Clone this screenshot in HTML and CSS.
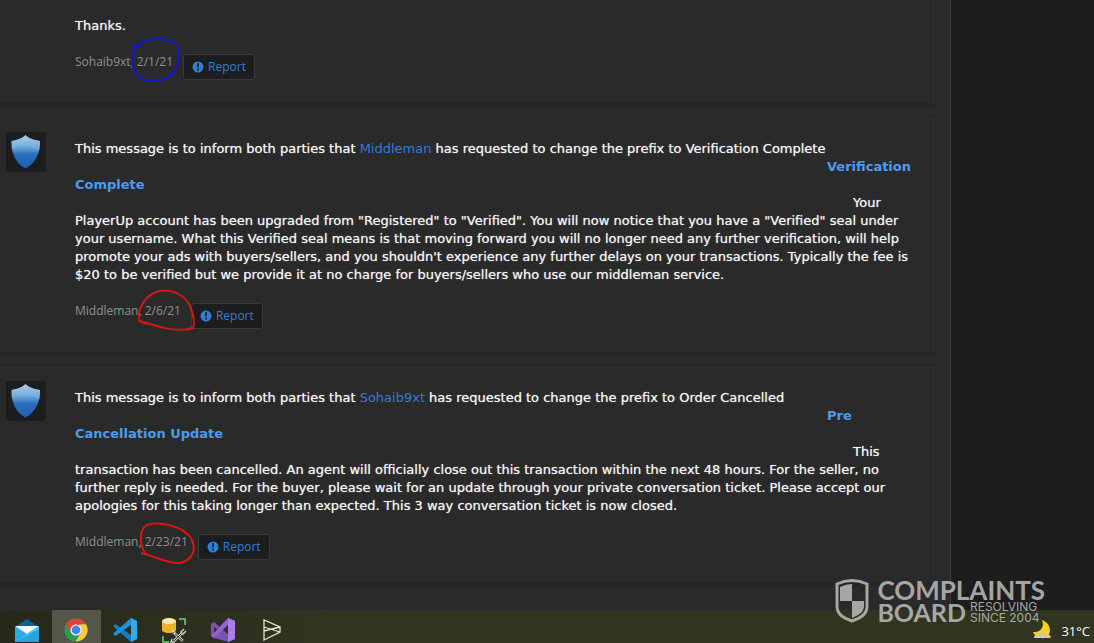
FILE: index.html
```html
<!DOCTYPE html>
<html lang="en">
<head>
<meta charset="utf-8">
<title>Conversation</title>
<link rel="stylesheet" href="styles.css">
</head>
<body>
<svg class="defs" aria-hidden="true">
  <defs>
    <linearGradient id="shield-fill" x1="0" y1="0" x2="0" y2="1">
      <stop offset="0" stop-color="#a5cbea"/>
      <stop offset=".42" stop-color="#5c9bd6"/>
      <stop offset=".58" stop-color="#2b6fbb"/>
      <stop offset="1" stop-color="#1e5fb0"/>
    </linearGradient>
    <symbol id="shield" viewBox="0 0 40 40">
      <path d="M19.500 3C22 6 28 8 34 9C34.500 20 30 31 19.500 36.500C9 31 5 20 5.500 9C11 8 17 6 19.500 3Z" fill="url(#shield-fill)"/>
      <path d="M5.700 17Q19 11 33.500 18Q34.500 12 34 9C28 8 22 6 19.500 3C17 6 11 8 5.500 9Z" fill="#b9d8f0" opacity=".2"/>
    </symbol>
    <symbol id="alert" viewBox="0 0 12 12">
      <circle cx="6" cy="6" r="5.500" fill="currentColor"/>
      <path d="M5 2.300H7L6.700 6.800H5.300Z" fill="#1c1d1e"/>
      <circle cx="6" cy="8.700" r="1" fill="#1c1d1e"/>
    </symbol>
  </defs>
</svg>
<div class="screen">
  <main class="page">
    <section class="thread">
      <article class="message first">
        <div class="body">
          <p>Thanks.</p>
          <footer class="meta">
            <span>Sohaib9xt, <span class="date">2/1/21<svg class="ring blue" viewBox="0 0 60 50"><path d="M7 10C2 16 0 29 5 37C11 48 27 47 37 43C47 38 50 23 48 13C45 4 31 3 20 5C14 6 9 9 4 15M3 12L10 8"/></svg></span></span>
            <button class="report" type="button"><svg><use href="#alert"/></svg>Report</button>
          </footer>
        </div>
      </article>
      <article class="message">
        <div class="avatar"><svg><use href="#shield"/></svg></div>
        <div class="body">
          <p>This message is to inform both parties that <a href="#">Middleman</a> has requested to change the prefix to Verification Complete</p>
          <p class="status">Verification<br>Complete</p>
          <p class="detail">Your<br>PlayerUp account has been upgraded from "Registered" to "Verified". You will now notice that you have a "Verified" seal under<br>your username. What this Verified seal means is that moving forward you will no longer need any further verification, will help<br>promote your ads with buyers/sellers, and you shouldn't experience any further delays on your transactions. Typically the fee is<br>$20 to be verified but we provide it at no charge for buyers/sellers who use our middleman service.</p>
          <footer class="meta">
            <span>Middleman, <span class="date">2/6/21<svg class="ring red" viewBox="0 0 60 50"><path d="M9 40L1 37C-1 28 5 14 16 9C29 3 45 9 51 20C55 29 57 39 55 44C41 49 21 43 2 37"/></svg></span></span>
            <button class="report" type="button"><svg><use href="#alert"/></svg>Report</button>
          </footer>
        </div>
      </article>
      <article class="message">
        <div class="avatar"><svg><use href="#shield"/></svg></div>
        <div class="body">
          <p>This message is to inform both parties that <a href="#">Sohaib9xt</a> has requested to change the prefix to Order Cancelled</p>
          <p class="status">Pre<br>Cancellation Update</p>
          <p class="detail">This<br>transaction has been cancelled. An agent will officially close out this transaction within the next 48 hours. For the seller, no<br>further reply is needed. For the buyer, please wait for an update through your private conversation ticket. Please accept our<br>apologies for this taking longer than expected. This 3 way conversation ticket is now closed.</p>
          <footer class="meta">
            <span>Middleman, <span class="date">2/23/21<svg class="ring red" viewBox="0 0 60 50"><path d="M3 39L7 38C1 27 1 15 9 10C20 6 45 11 53 23C59 34 55 45 42 48C29 49 14 40 3 38"/></svg></span></span>
            <button class="report" type="button"><svg><use href="#alert"/></svg>Report</button>
          </footer>
        </div>
      </article>
    </section>
  </main>
  <nav class="taskbar" aria-label="Taskbar">
    <button type="button" aria-label="Mail"><svg viewBox="0 0 26 26"><path d="M1 10L13 2L25 10V14H1Z" fill="#0f5da8"/><path d="M2 9H24V17H2Z" fill="#f5f8fb"/><path d="M1 9L13 17L25 9V25H1Z" fill="#27aee6"/><path d="M1 25L13 17L25 9V25Z" fill="#49c1ee"/><path d="M1 25L25 12V25Z" fill="#168fd0" opacity=".6"/></svg></button>
    <button class="active" type="button" aria-label="Chrome"><svg viewBox="0 0 26 26"><circle cx="13" cy="13" r="11.500" fill="#2a9d52"/><path d="M3 7.200A11.500 11.500 0 0 1 23 7.200L13 8L8 16Z" fill="#db4437"/><path d="M23 7.200A11.500 11.500 0 0 1 12.800 24.500L18 15L16 7.500Z" fill="#f9cc3d"/><circle cx="13" cy="13" r="5.600" fill="#fff"/><circle cx="13" cy="13" r="4.400" fill="#4580ea"/></svg></button>
    <button type="button" aria-label="Visual Studio Code"><svg viewBox="0 0 26 26"><path d="M19 1L25 4V22L19 25L3 11L1 9L3.500 7L19 18Z" fill="#147cc1"/><path d="M19 1L3 15L1 17L3.500 19L19 8Z" fill="#1b91d8"/><path d="M19 1L25 4V22L19 25Z" fill="#31a9ed"/></svg></button>
    <button type="button" aria-label="Database tools"><svg viewBox="0 0 26 26"><path d="M1 4V13C1 17 15 17 15 13V4Z" fill="#eeb32d"/><ellipse cx="8" cy="4" rx="7" ry="3" fill="#ffe9ad"/><path d="M18 2H24V8M2 19V25H8" fill="none" stroke="#66a866" stroke-width="2"/><path d="M12 15L22 24M13 24L21 16" stroke="#c9c9c3" stroke-width="2.500"/><path d="M12 15L22 24M13 24L21 16" stroke="#34362c" stroke-width="1"/><path d="M23 12L20 15L22 17L25 14M10 14L13 14L14 17M11 22L10 25L14 25" fill="none" stroke="#c9c9c3" stroke-width="1.500"/></svg></button>
    <button type="button" aria-label="Visual Studio"><svg viewBox="0 0 26 26"><path d="M1 7L4 5L19 18V25L4 21L1 19ZM4 10V16L8 13Z" fill="#7952b3" fill-rule="evenodd"/><path d="M18 1L25 4V22L18 25V8L4 21L1 19Z" fill="#965fd4"/><path d="M18 1L25 4V22L18 25Z" fill="#ad7bee"/></svg></button>
    <button type="button" aria-label="Deployment"><svg viewBox="0 0 26 26"><path d="M5 3V23L21 15V10ZM5 14L21 10M5 10L21 15" fill="none" stroke="#e5e3cb" stroke-width="1.300"/></svg></button>
    <div class="weather"><svg viewBox="0 0 22 22"><path d="M11 0C20 3 21 13 16 17C11 20 4 17 2 12C9 13 14 7 11 0Z" fill="#f8cf25"/><path d="M3 18C3 14 7 15 8 14C11 11 15 13 16 15C19 14 21 17 19 18Z" fill="#d6c6ac"/></svg><span>31°C</span></div>
  </nav>
  <div class="watermark">
    <svg viewBox="0 0 34 44"><path d="M2 5Q17-2 32 5V27C32 36 25 39 17 42C9 39 2 36 2 27Z" fill="none" stroke="currentColor" stroke-width="3"/><path d="M17 5V22H5V8Q11 5 17 5ZM17 22H29V27C29 33 24 36 17 39Z" fill="currentColor"/></svg>
    <div class="brand"><strong>COMPLAINTS</strong><div class="lower"><strong>BOARD</strong><span>RESOLVING<br>SINCE 2004</span></div></div>
  </div>
</div>
</body>
</html>
```
FILE: styles.css
```css
* { box-sizing: border-box; }

body {
  margin: 0;
  background: #1d1d1d;
  color: #f4f4f4;
  font: 13px/18px "DejaVu Sans", sans-serif;
}

button { font: inherit; cursor: pointer; }

.defs { position: absolute; width: 0; height: 0; }

.screen {
  position: relative;
  display: flex;
  flex-direction: column;
  min-height: 100vh;
}

.page {
  flex: 1;
  margin-right: 143px;
  padding-right: 16px;
  background: #2a2a2a;
  border-right: 1px solid #3a3a3a;
}

.thread {
  display: flex;
  flex-direction: column;
  gap: 14px;
}

.message {
  display: flex;
  padding: 21px 0 23px 6px;
  border: 1px solid #303030;
  border-left: 0;
  border-bottom-color: #252525;
  box-shadow: 0 1px 3px #262626;
}

.message.first {
  padding: 17px 0 23px 75px;
  border-top: 0;
}

.avatar {
  flex: none;
  width: 40px;
  height: 40px;
  margin: -8px 29px 0 0;
  border-radius: 3px;
  background: #1c1d1e;
}

.avatar svg { display: block; width: 40px; height: 40px; }

.body { flex: 1; min-width: 0; }

p {
  margin: 0;
  white-space: nowrap;
  text-shadow: 0 0 1px #bbbbbb;
}

a { color: #2e7dd7; text-decoration: none; text-shadow: none; }

.status {
  color: #4d9bf0;
  font-weight: bold;
  text-indent: 752px;
  text-shadow: none;
}

.detail { text-indent: 778px; }

.meta {
  display: flex;
  align-items: flex-start;
  gap: 10px;
  margin-top: 19px;
  color: #8f8f8f;
  font: 12px/16px "Open Sans", sans-serif;
}

.date { position: relative; }

.ring {
  position: absolute;
  left: -7px;
  top: -18px;
  width: 60px;
  height: 50px;
  fill: none;
  stroke: #d31616;
  stroke-width: 2;
}

.blue { stroke: #1515c8; }

.report {
  display: flex;
  align-items: center;
  gap: 4px;
  padding: 4px 8px;
  border: 1px solid #3a3a3a;
  border-radius: 3px;
  background: #1c1d1e;
  color: #2e7dd7;
}

.report svg { width: 12px; height: 12px; }

.taskbar {
  display: flex;
  align-items: stretch;
  height: 33px;
  padding-left: 3px;
  overflow: hidden;
  background: linear-gradient(90deg, #27281a, #323422 30%, #30351f);
}

.taskbar button {
  width: 49px;
  padding: 7px 0 0 11px;
  border: 0;
  background: transparent;
  text-align: left;
}

.taskbar .active { background: #555748; }

.taskbar svg { display: block; width: 26px; height: 26px; }

.weather {
  display: flex;
  align-items: center;
  gap: 8px;
  margin-left: auto;
  padding: 8px 4px 0 0;
  color: #ffffff;
  font-family: "Open Sans", sans-serif;
}

.taskbar .weather svg { width: 22px; height: 22px; }

.watermark {
  position: absolute;
  right: 49px;
  bottom: 20px;
  display: flex;
  align-items: center;
  gap: 8px;
  color: #b4b4b4;
  font: 26px/22px Lato, sans-serif;
  opacity: 0.9;
}

.watermark > svg { width: 34px; height: 44px; }

.brand { display: flex; flex-direction: column; }

.lower { display: flex; align-items: center; gap: 4px; }

.lower strong { font-size: 25px; }

.lower span { font: 12px/11px Inter, sans-serif; }
```
